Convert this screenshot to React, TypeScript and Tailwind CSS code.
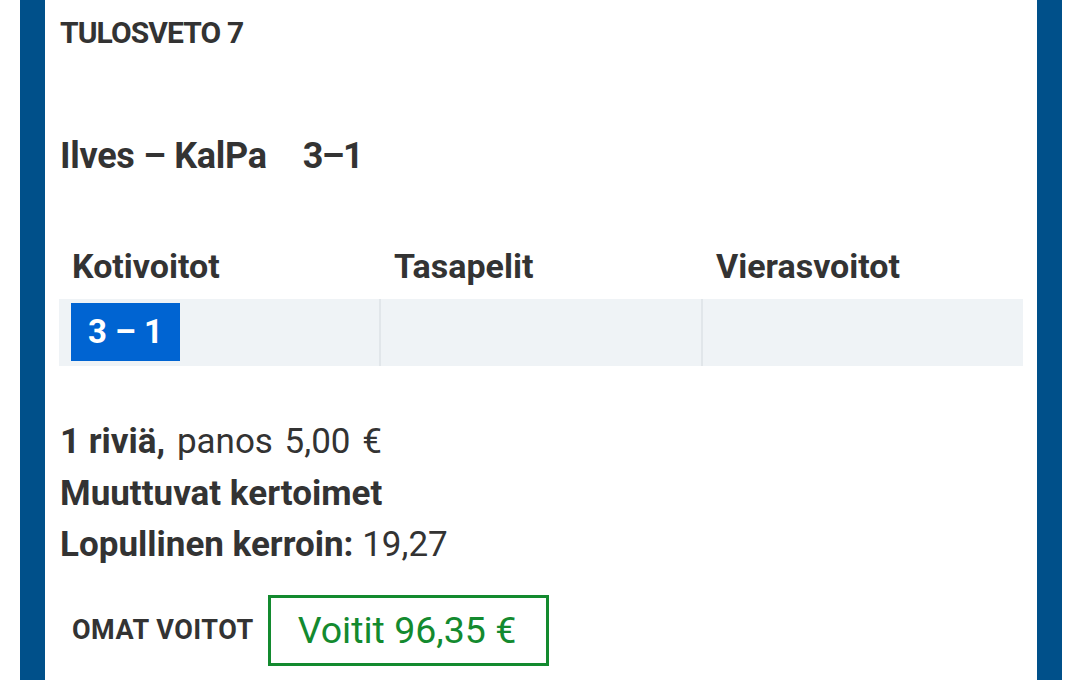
const columns = ['Kotivoitot', 'Tasapelit', 'Vierasvoitot'];

export default function App() {
	return (
		<div
			className="min-h-[680px] bg-white pr-[18px] pl-[20px] text-[#333333]"
			style={{ fontFamily: 'Roboto, "Liberation Sans", sans-serif' }}
		>
			<div className="min-h-[680px] border-x-[25px] border-[#00508a] px-[14px] pt-[16px]">
				<h3 className="pl-[1px] text-[30px] leading-[34px] font-bold tracking-[-0.9px]">
					TULOSVETO 7
				</h3>

				<div className="mt-[84px] flex pl-[1px] text-[36px] leading-[44px] font-bold tracking-[-0.3px]">
					<span>Ilves – KalPa</span>
					<span className="ml-[36px] tracking-[-1.5px]">3–1</span>
				</div>

				<div className="mt-[68px] grid grid-cols-3 gap-[2px] text-[34px] leading-[40px] font-bold">
					{columns.map((c) => (
						<div key={c} className="pl-[13px]">
							{c}
						</div>
					))}
				</div>

				<div className="mt-[13px] grid h-[67px] grid-cols-3 gap-[2px] bg-[#e1e6ea]">
					<div className="bg-[#eff3f6] pt-[4px] pl-[12px]">
						<span className="inline-flex h-[58px] w-[109px] items-center justify-center bg-[#0064d2] text-[33px] font-bold text-white">
							3 – 1
						</span>
					</div>
					<div className="bg-[#eff3f6]" />
					<div className="bg-[#eff3f6]" />
				</div>

				<div className="mt-[50px] pl-[1px] text-[35px] leading-[51.5px]">
					<p>
						<span className="font-bold">1 riviä,</span>
						<span className="[word-spacing:3px]"> panos 5,00 €</span>
					</p>
					<p className="font-bold">Muuttuvat kertoimet</p>
					<p>
						<span className="font-bold">Lopullinen kerroin:</span> 19,27
					</p>
				</div>

				<div className="mt-[24px] flex items-center pl-[13px]">
					<span className="text-[27px] font-bold tracking-[0.5px]">OMAT VOITOT</span>
					<span className="ml-[14px] flex h-[71px] w-[281px] items-center border-[3px] border-[#138a2f] pl-[27px] text-[37.5px] text-[#138a2f]">
						Voitit 96,35 €
					</span>
				</div>
			</div>
		</div>
	);
}
